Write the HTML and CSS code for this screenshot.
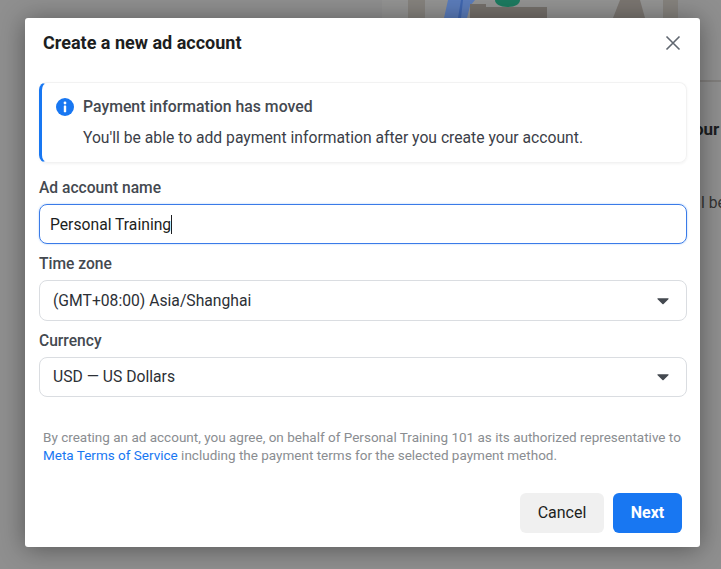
FILE: index.html
```html
<!DOCTYPE html>
<html lang="en">
<head>
<meta charset="utf-8">
<title>Create a new ad account</title>
<link rel="stylesheet" href="styles.css">
</head>
<body>
<div class="backdrop" aria-hidden="true">
  <svg class="illustration" width="296" height="18" viewBox="0 0 296 18">
    <rect x="0" y="0" width="296" height="18" fill="#939392"/>
    <rect x="26" y="0" width="17" height="18" fill="#85827d"/>
    <rect x="281" y="0" width="15" height="18" fill="#85827d"/>
    <path d="M66 0h27l-5 6 -3 12H62z" fill="#5b7cba"/>
    <path d="M79 0h2l-2 18h-3z" fill="#3f66b0"/>
    <path d="M88 4h16v3h61v11H88z" fill="#746f6a"/>
    <path d="M113 0h25c0 4-5 7-12.500 7s-12.500-3-12.500-7z" fill="#1c7a5f"/>
    <path d="M238 0h20l5 18h-32z" fill="#7a7570"/>
  </svg>
  <div class="page-line"></div>
  <div class="peek-heading">our</div>
  <div class="peek-text">l be</div>
</div>
<section class="modal" role="dialog" aria-label="Create a new ad account">
  <header class="modal-head">
    <h1>Create a new ad account</h1>
    <svg class="close" width="16" height="16" viewBox="0 0 16 16" aria-label="Close"><path d="M1.500 1.500l13 13M14.500 1.500l-13 13"/></svg>
  </header>
  <div class="notice">
    <svg class="info" width="18" height="18" viewBox="0 0 18 18"><circle cx="9" cy="9" r="9" fill="#1877f2"/><circle cx="9" cy="5" r="1.400" fill="#fff"/><rect x="7.800" y="7.600" width="2.400" height="6.600" rx=".4" fill="#fff"/></svg>
    <div class="notice-body">
      <h2>Payment information has moved</h2>
      <p>You'll be able to add payment information after you create your account.</p>
    </div>
  </div>
  <div class="field first">
    <label>Ad account name</label>
    <div class="control focused"><span>Personal Training</span><i class="caret"></i></div>
  </div>
  <div class="field">
    <label>Time zone</label>
    <div class="control select"><span>(GMT+08:00) Asia/Shanghai</span><svg class="arrow" width="12" height="8" viewBox="0 0 12 8"><path d="M1 1.200h10c.5 0 .8.5.4 1L6.600 7a.8.8 0 0 1-1.200 0L.6 2.200c-.4-.5-.1-1 .4-1z"/></svg></div>
  </div>
  <div class="field">
    <label>Currency</label>
    <div class="control select short"><span>USD — US Dollars</span><svg class="arrow" width="12" height="8" viewBox="0 0 12 8"><path d="M1 1.200h10c.5 0 .8.5.4 1L6.600 7a.8.8 0 0 1-1.200 0L.6 2.200c-.4-.5-.1-1 .4-1z"/></svg></div>
  </div>
  <p class="terms">By creating an ad account, you agree, on behalf of Personal Training 101 as its authorized representative to <a href="#">Meta Terms of Service</a> including the payment terms for the selected payment method.</p>
  <footer class="actions">
    <button class="btn cancel" type="button">Cancel</button>
    <button class="btn next" type="button">Next</button>
  </footer>
</section>
</body>
</html>
```
FILE: styles.css
```css
* { box-sizing: border-box; }
html, body { margin: 0; height: 100%; }
body {
  width: 721px;
  height: 569px;
  overflow: hidden;
  background: #8f8f8f;
  font-family: Roboto, "Liberation Sans", sans-serif;
  color: #1c1e21;
  position: relative;
  padding: 18px 0 0 25px;
}
.backdrop { position: absolute; inset: 0; overflow: hidden; }
.illustration { position: absolute; left: 382px; top: 0; }
.page-line { position: absolute; left: 700px; top: 80px; width: 21px; height: 2px; background: #807e7c; }
.peek-heading { position: absolute; left: 694px; top: 119px; font-size: 17px; line-height: 20px; font-weight: 700; color: #1c1e21; white-space: nowrap; }
.peek-text { position: absolute; left: 701px; top: 194px; font-size: 15.700px; line-height: 18px; color: #333; white-space: nowrap; }
.modal {
  position: relative;
  width: 675px;
  height: 529px;
  background: #fff;
  border-radius: 3px;
  box-shadow: 0 2px 26px rgba(0,0,0,.4);
  padding: 0 14px;
}
.modal-head {
  display: flex;
  justify-content: space-between;
  align-items: center;
  height: 50px;
  padding: 0 5px 0 4px;
}
h1 { margin: 0; font-size: 18px; font-weight: 700; line-height: 50px; color: #1c1e21; }
.close { fill: none; stroke: #606770; stroke-width: 1.600; }
.notice {
  margin-top: 14px;
  width: 648px;
  height: 81px;
  border: 1px solid #f2f2f2;
  border-left: 3px solid #1877f2;
  border-radius: 8px;
  box-shadow: 0 1px 3px rgba(0,0,0,.05);
  display: flex;
  padding: 15px 0 0 14px;
  gap: 9px;
}
.info { flex: none; }
.notice-body h2 { margin: 0; font-size: 15.800px; font-weight: 500; line-height: 18px; color: #444950; }
.notice-body p { margin: 13px 0 0; font-size: 15.700px; line-height: 18px; color: #3b4048; }
.field { width: 648px; margin-top: 11px; }
.field.first { margin-top: 16px; }
label { display: block; font-size: 15.600px; font-weight: 500; line-height: 18px; color: #444950; margin-bottom: 7px; }
.control {
  height: 41px;
  border: 1px solid #dadde1;
  border-radius: 8px;
  display: flex;
  align-items: center;
  padding: 0 17px 1px 13px;
  font-size: 15.700px;
  color: #2c3036;
}
.control.short { height: 40px; }
.control.select { justify-content: space-between; }
.control.focused {
  height: 40px;
  border-color: #3a7be8;
  padding: 0 16px 0 10px;
  box-shadow: 0 0 2px rgba(24,119,242,.4);
  color: #1c1e21;
}
.caret { display: inline-block; width: 1px; height: 19px; background: #1c1e21; }
.arrow { fill: #444950; margin-top: 1px; }
.terms {
  margin: 31px 0 0;
  padding: 0 4px;
  width: 648px;
  font-size: 13.500px;
  line-height: 18px;
  color: #8a8d91;
}
.terms a { color: #1877f2; text-decoration: none; }
.actions {
  display: flex;
  justify-content: flex-end;
  gap: 9px;
  width: 643px;
  margin-top: 29px;
}
.btn {
  height: 40px;
  border: 0;
  border-radius: 6px;
  padding: 0 0 2px;
  font-family: inherit;
  font-size: 16px;
}
.cancel { width: 84px; background: #f0f0f0; color: #1c1e21; }
.next { width: 69px; background: #1877f2; color: #fff; font-weight: 700; }
```
